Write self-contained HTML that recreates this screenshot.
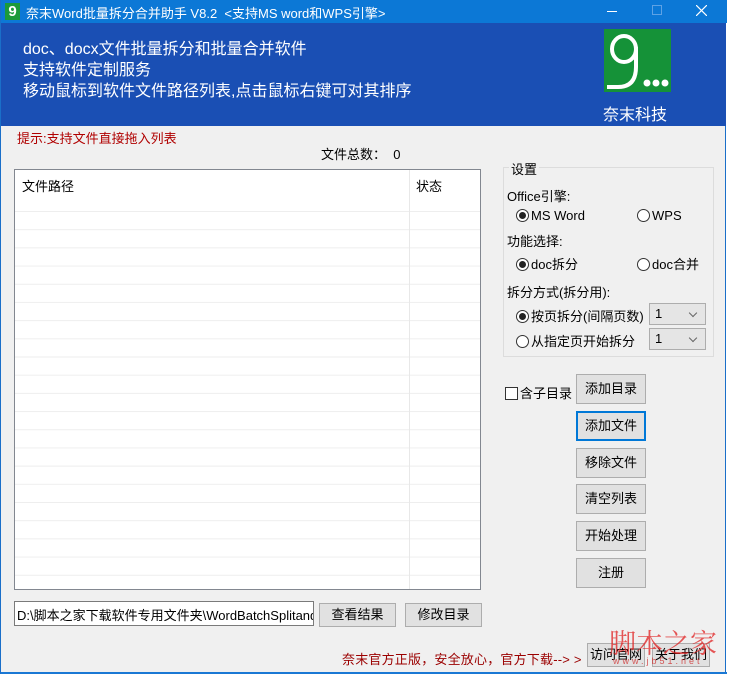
<!DOCTYPE html>
<html><head><meta charset="utf-8"><style>
*{margin:0;padding:0;box-sizing:border-box}
body{width:730px;height:674px;background:#fff;position:relative;overflow:hidden;font-family:"Liberation Sans","Noto Sans CJK SC",sans-serif;font-size:12px;color:#000}
.win{position:absolute;left:0;top:0;width:726px;height:674px;background:#f0f0f0;border:1px solid #1a6fc9;border-top:none}
.a{position:absolute;white-space:nowrap}
.btn{position:absolute;background:#e1e1e1;border:1px solid #adadad;text-align:center;font-size:13px}
.rb{display:inline-block;width:13px;height:13px;border:1px solid #333;border-radius:50%;vertical-align:-2px;margin-right:2px;background:#fff;position:relative}
.rb.on::after{content:"";position:absolute;left:2px;top:2px;width:7px;height:7px;border-radius:50%;background:#222}
.sel{position:absolute;background:#e5e5e5;border:1px solid #adadad;height:22px;width:57px;padding:2px 5px;font-size:13px}
.sel::after{content:"";position:absolute;right:9px;top:6px;width:5px;height:5px;border-right:1px solid #666;border-bottom:1px solid #666;transform:rotate(45deg)}
</style></head><body>
<div class="win">
<div class="a" style="left:0;top:0;width:726px;height:23px;background:#0c78d6"></div>
<div class="a" style="left:4px;top:3px;width:15px;height:17px;background:#1b9a3a;color:#fff;font-weight:bold;font-size:15px;line-height:17px;text-align:center">9</div>
<div class="a" style="left:25px;top:3px;color:#fff;font-size:13px">奈末Word批量拆分合并助手 V8.2 &nbsp;&lt;支持MS word和WPS引擎&gt;</div>
<div class="a" style="left:606px;top:11px;width:10px;height:1px;background:#fff"></div>
<div class="a" style="left:651px;top:5px;width:10px;height:10px;border:1px solid #5ea2e5"></div>
<svg class="a" style="left:695px;top:5px" width="11" height="11"><path d="M0 0L11 11M11 0L0 11" stroke="#fff" stroke-width="1.2"/></svg>
<div class="a" style="left:0;top:23px;width:725px;height:103px;background:#1a4fb4"></div>
<div class="a" style="left:22px;top:39px;color:#fff;font-size:16px;line-height:21px">doc、docx文件批量拆分和批量合并软件<br>支持软件定制服务<br>移动鼠标到软件文件路径列表,点击鼠标右键可对其排序</div>
<div class="a" style="left:603px;top:29px;width:67px;height:63px;background:#159238;overflow:hidden">
<svg class="a" style="left:0;top:0" width="67" height="63"><ellipse cx="20" cy="20" rx="12" ry="13" fill="none" stroke="#fff" stroke-width="4"/><path d="M32 18 V38 Q32 58 14 58 H3" fill="none" stroke="#fff" stroke-width="4"/><circle cx="43" cy="54" r="3.5" fill="#fff"/><circle cx="52" cy="54" r="3.5" fill="#fff"/><circle cx="61" cy="54" r="3.5" fill="#fff"/></svg>
</div>
<div class="a" style="left:602px;top:101px;color:#fff;font-size:16px">奈末科技</div>
<div class="a" style="left:16px;top:128px;color:#b00000;font-size:13px">提示:支持文件直接拖入列表</div>
<div class="a" style="left:320px;top:144px;font-size:13px">文件总数： &nbsp;0</div>
<div class="a" style="left:13px;top:169px;width:467px;height:421px;background:#fff;border:1px solid #828790;overflow:hidden;
background-image:linear-gradient(#eee 1px,transparent 1px);background-size:100% 18.2px;background-position:0 41px">
<div class="a" style="left:0;top:0;width:465px;height:41px;background:#fff"></div>
<div class="a" style="left:394px;top:0;width:1px;height:421px;background:#e8e8e8"></div>
<div class="a" style="left:7px;top:6px;font-size:13px">文件路径</div>
<div class="a" style="left:401px;top:6px;font-size:13px">状态</div>
</div>
<div class="a" style="left:502px;top:167px;width:211px;height:190px;border:1px solid #dcdcdc"></div>
<div class="a" style="left:508px;top:159px;background:#f0f0f0;padding:0 2px;font-size:13px">设置</div>
<div class="a" style="left:506px;top:186px;font-size:13px">Office引擎:</div>
<div class="a" style="left:515px;top:208px;font-size:13px"><span class="rb on"></span>MS Word</div>
<div class="a" style="left:636px;top:208px;font-size:13px"><span class="rb"></span>WPS</div>
<div class="a" style="left:506px;top:231px;font-size:13px">功能选择:</div>
<div class="a" style="left:515px;top:254px;font-size:13px"><span class="rb on"></span>doc拆分</div>
<div class="a" style="left:636px;top:254px;font-size:13px"><span class="rb"></span>doc合并</div>
<div class="a" style="left:506px;top:282px;font-size:13px">拆分方式(拆分用):</div>
<div class="a" style="left:515px;top:306px;font-size:13px"><span class="rb on"></span>按页拆分(间隔页数)</div>
<div class="a" style="left:515px;top:331px;font-size:13px"><span class="rb"></span>从指定页开始拆分</div>
<div class="sel" style="left:648px;top:303px">1</div>
<div class="sel" style="left:648px;top:328px">1</div>
<div class="a" style="left:504px;top:383px;font-size:13px"><span style="display:inline-block;width:13px;height:13px;border:1px solid #333;background:#fff;vertical-align:-2px;margin-right:2px"></span>含子目录</div>
<div class="btn" style="left:575px;top:374px;width:70px;height:30px;line-height:28px">添加目录</div>
<div class="btn" style="left:575px;top:411px;width:70px;height:30px;line-height:26px;border:2px solid #0078d7">添加文件</div>
<div class="btn" style="left:575px;top:448px;width:70px;height:30px;line-height:28px">移除文件</div>
<div class="btn" style="left:575px;top:484px;width:70px;height:30px;line-height:28px">清空列表</div>
<div class="btn" style="left:575px;top:521px;width:70px;height:30px;line-height:28px">开始处理</div>
<div class="btn" style="left:575px;top:558px;width:70px;height:30px;line-height:28px">注册</div>
<div class="a" style="left:13px;top:601px;width:300px;height:25px;background:#fff;border:1px solid #7a7a7a;padding:3px 2px;font-size:13px;overflow:hidden">D:\脚本之家下载软件专用文件夹\WordBatchSplitandM</div>
<div class="btn" style="left:318px;top:603px;width:77px;height:24px;line-height:22px">查看结果</div>
<div class="btn" style="left:404px;top:603px;width:77px;height:24px;line-height:22px">修改目录</div>
<div class="a" style="left:341px;top:649px;color:#9b0000;font-size:13px;letter-spacing:.2px">奈末官方正版，安全放心，官方下载--&gt; &gt;</div>
<div class="btn" style="left:586px;top:643px;width:58px;height:24px;line-height:22px">访问官网</div>
<div class="btn" style="left:651px;top:643px;width:58px;height:24px;line-height:22px">关于我们</div>
<div class="a" style="left:608px;top:622px;color:#e02020;font-size:27px;font-family:'Noto Serif CJK SC',serif;opacity:.75">脚本之家</div>
<div class="a" style="left:612px;top:656px;color:#d03030;font-size:9px;letter-spacing:3px;opacity:.8">www.jb51.net</div>
<div class="a" style="left:0;top:672px;width:726px;height:2px;background:#1a78d4"></div>
</div>
</body></html>
